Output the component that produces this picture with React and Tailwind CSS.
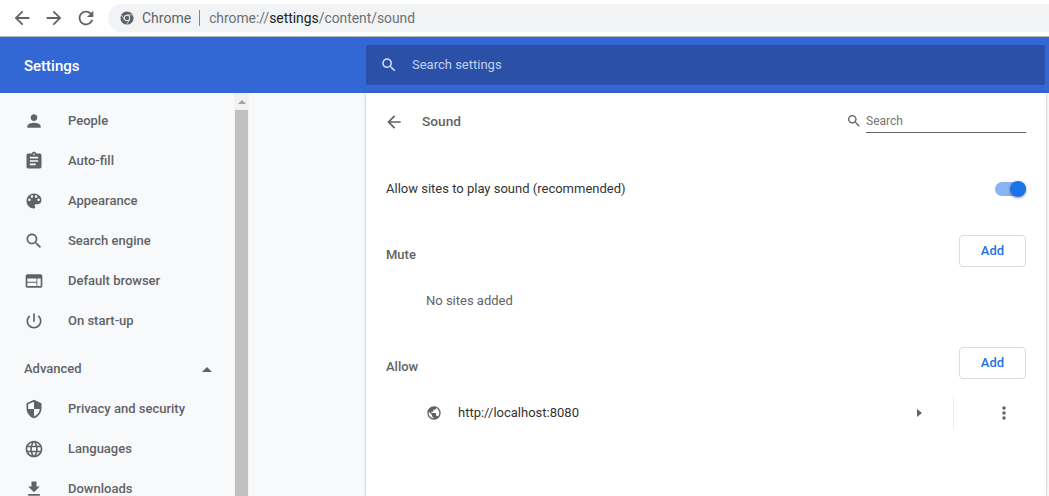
const paths = {
  person: "M12 12c2.21 0 4-1.79 4-4s-1.79-4-4-4-4 1.79-4 4 1.79 4 4 4zm0 2c-2.67 0-8 1.34-8 4v2h16v-2c0-2.66-5.33-4-8-4z",
  assignment: "M19 3h-4.18C14.4 1.84 13.3 1 12 1c-1.3 0-2.4.84-2.82 2H5c-1.1 0-2 .9-2 2v14c0 1.1.9 2 2 2h14c1.1 0 2-.9 2-2V5c0-1.1-.9-2-2-2zm-7 0c.55 0 1 .45 1 1s-.45 1-1 1-1-.45-1-1 .45-1 1-1zm2 14H7v-2h7v2zm3-4H7v-2h10v2zm0-4H7V7h10v2z",
  palette: "M12 3c-4.97 0-9 4.03-9 9s4.03 9 9 9c.83 0 1.5-.67 1.5-1.5 0-.39-.15-.74-.39-1.01-.23-.26-.38-.61-.38-.99 0-.83.67-1.5 1.5-1.5H16c2.76 0 5-2.24 5-5 0-4.42-4.03-8-9-8zm-5.5 9c-.83 0-1.5-.67-1.5-1.5S5.67 9 6.5 9 8 9.67 8 10.5 7.33 12 6.5 12zm3-4C8.67 8 8 7.33 8 6.5S8.67 5 9.5 5s1.5.67 1.5 1.5S10.33 8 9.5 8zm5 0c-.83 0-1.5-.67-1.5-1.5S13.67 5 14.5 5s1.5.67 1.5 1.5S15.33 8 14.5 8zm3 4c-.83 0-1.5-.67-1.5-1.5S16.67 9 17.5 9s1.5.67 1.5 1.5-.67 1.5-1.5 1.5z",
  search: "M15.5 14h-.79l-.28-.27C15.41 12.59 16 11.11 16 9.5 16 5.91 13.09 3 9.5 3S3 5.91 3 9.5 5.91 16 9.5 16c1.61 0 3.09-.59 4.23-1.57l.27.28v.79l5 4.99L20.49 19l-4.99-5zm-6 0C7.01 14 5 11.99 5 9.5S7.01 5 9.5 5 14 7.01 14 9.5 11.99 14 9.5 14z",
  web: "M20 4H4c-1.1 0-1.99.9-1.99 2L2 18c0 1.1.9 2 2 2h16c1.1 0 2-.9 2-2V6c0-1.1-.9-2-2-2zm-5 14H4v-4h11v4zm0-5H4V9h11v4zm5 5h-4V9h4v9z",
  power: "M13 3h-2v10h2V3zm4.83 2.17l-1.42 1.42C17.99 7.86 19 9.81 19 12c0 3.87-3.13 7-7 7s-7-3.13-7-7c0-2.19 1.01-4.14 2.58-5.42L6.17 5.17C4.23 6.82 3 9.26 3 12c0 4.97 4.03 9 9 9s9-4.03 9-9c0-2.74-1.23-5.18-3.17-6.83z",
  security: "M12 1L3 5v6c0 5.55 3.84 10.74 9 12 5.16-1.26 9-6.45 9-12V5l-9-4zm0 10.99h7c-.53 4.12-3.28 7.79-7 8.94V12H5V6.3l7-3.11v8.8z",
  language: "M11.99 2C6.47 2 2 6.48 2 12s4.47 10 9.99 10C17.52 22 22 17.52 22 12S17.52 2 11.99 2zm6.93 6h-2.95c-.32-1.25-.78-2.45-1.38-3.56 1.84.63 3.37 1.91 4.33 3.56zM12 4.04c.83 1.2 1.48 2.53 1.91 3.96h-3.82c.43-1.43 1.08-2.76 1.91-3.96zM4.26 14C4.1 13.36 4 12.69 4 12s.1-1.36.26-2h3.38c-.08.66-.14 1.32-.14 2 0 .68.06 1.34.14 2H4.26zm.82 2h2.95c.32 1.25.78 2.45 1.38 3.56-1.84-.63-3.37-1.9-4.33-3.56zm2.95-8H5.08c.96-1.66 2.49-2.93 4.33-3.56C8.81 5.55 8.35 6.75 8.03 8zM12 19.96c-.83-1.2-1.48-2.53-1.91-3.96h3.82c-.43 1.43-1.08 2.76-1.91 3.96zM14.34 14H9.66c-.09-.66-.16-1.32-.16-2 0-.68.07-1.35.16-2h4.68c.09.65.16 1.32.16 2 0 .68-.07 1.34-.16 2zm.25 5.56c.6-1.11 1.06-2.31 1.38-3.56h2.95c-.96 1.65-2.49 2.93-4.33 3.56zM16.36 14c.08-.66.14-1.32.14-2 0-.68-.06-1.34-.14-2h3.38c.16.64.26 1.31.26 2s-.1 1.36-.26 2h-3.38z",
  download: "M19 9h-4V3H9v6H5l7 7 7-7zM5 18v2h14v-2H5z",
  globe: "M12 2C6.48 2 2 6.48 2 12s4.48 10 10 10 10-4.48 10-10S17.52 2 12 2zm-1 17.93c-3.95-.49-7-3.85-7-7.93 0-.62.08-1.21.21-1.79L9 15v1c0 1.1.9 2 2 2v1.93zm6.9-2.54c-.26-.81-1-1.39-1.9-1.39h-1v-3c0-.55-.45-1-1-1H8v-2h2c.55 0 1-.45 1-1V7h2c1.1 0 2-.9 2-2v-.41c2.93 1.19 5 4.06 5 7.41 0 2.08-.8 3.97-2.1 5.39z",
  more: "M12 8c1.1 0 2-.9 2-2s-.9-2-2-2-2 .9-2 2 .9 2 2 2zm0 2c-1.1 0-2 .9-2 2s.9 2 2 2 2-.9 2-2-.9-2-2-2zm0 6c-1.1 0-2 .9-2 2s.9 2 2 2 2-.9 2-2-.9-2-2-2z",
  back: "M20 11H7.83l5.59-5.59L12 4l-8 8 8 8 1.41-1.41L7.83 13H20v-2z",
  forward: "M12 4l-1.41 1.41L16.17 11H4v2h12.17l-5.58 5.59L12 20l8-8z",
  refresh: "M17.65 6.35C16.2 4.9 14.21 4 12 4c-4.42 0-7.99 3.58-7.99 8s3.57 8 7.99 8c3.73 0 6.84-2.55 7.73-6h-2.08c-.82 2.33-3.04 4-5.65 4-3.31 0-6-2.69-6-6s2.69-6 6-6c1.66 0 3.14.69 4.22 1.78L13 11h7V4l-2.35 2.35z",
};

function Icon({ name, className }) {
  return (
    <svg viewBox="0 0 24 24" className={className} fill="currentColor">
      <path d={paths[name]} />
    </svg>
  );
}

function ChromeLogo() {
  return (
    <svg viewBox="0 0 16 16" className="w-[14px] h-[14px] text-[#5f6368]">
      <circle cx="8" cy="8" r="7.5" fill="currentColor" />
      <circle cx="8" cy="8" r="3.6" fill="#f1f3f4" />
      <circle cx="8" cy="8" r="2.6" fill="currentColor" />
      <path d="M8 4.4h6.4M5 10l-3-5.4M10.9 10l-3.3 5.4" stroke="#f1f3f4" strokeWidth="0.8" fill="none" />
    </svg>
  );
}

function Toolbar() {
  return (
    <div className="h-[37px] shrink-0 flex items-center bg-white border-b border-[#b8b8b8]">
      <div className="w-[108px] shrink-0 flex items-center text-[#5f6368] pl-[11px] gap-[10px]">
        <Icon name="back" className="w-[22px] h-[22px]" />
        <Icon name="forward" className="w-[22px] h-[22px]" />
        <Icon name="refresh" className="w-[22px] h-[22px]" />
      </div>
      <div className="flex-1 h-[28px] -mr-8 rounded-full bg-[#f1f3f4] flex items-center pl-[12px] text-[14px]">
        <ChromeLogo />
        <span className="ml-[8px] text-[#5f6368]">Chrome</span>
        <span className="ml-[8px] w-px h-[16px] bg-[#80868b]" />
        <span className="ml-[9px] text-[13.85px] text-[#6d7175]">
          chrome://<span className="text-[#202124]">settings</span>/content/sound
        </span>
      </div>
    </div>
  );
}

function Header() {
  return (
    <div className="h-[56px] shrink-0 flex items-center bg-[#3367d6]">
      <div className="w-[366px] shrink-0 pl-[24px] pt-[2px] text-white text-[15px] font-medium">Settings</div>
      <div className="w-[679px] h-[40px] mb-[1px] rounded-[2px] bg-[#2a50a8] flex items-center pl-[14px] gap-[14px] text-[#c3d0ec] text-[13px]">
        <Icon name="search" className="w-[18px] h-[18px] text-[#d3ddf2]" />
        <span>Search settings</span>
      </div>
    </div>
  );
}

function NavItem({ icon, label }) {
  return (
    <div className="h-[40px] flex items-center pl-[24px]">
      <Icon name={icon} className="w-5 h-5 text-[#5f6368] shrink-0" />
      <span className="ml-[24px] text-[13px] font-medium text-[#5f6368]">{label}</span>
    </div>
  );
}

function Sidebar() {
  return (
    <div className="w-[234px] shrink-0 bg-[#f8f9fa] pt-[8px] overflow-hidden">
      <NavItem icon="person" label="People" />
      <NavItem icon="assignment" label="Auto-fill" />
      <NavItem icon="palette" label="Appearance" />
      <NavItem icon="search" label="Search engine" />
      <NavItem icon="web" label="Default browser" />
      <NavItem icon="power" label="On start-up" />
      <div className="mt-[8px] h-[40px] flex items-center justify-between pl-[24px] pr-[21px]">
        <span className="text-[13px] font-medium text-[#5f6368]">Advanced</span>
        <span className="mr-[1px] w-0 h-0 border-x-[5px] border-x-transparent border-b-[5px] border-b-[#5f6368]" />
      </div>
      <NavItem icon="security" label="Privacy and security" />
      <NavItem icon="language" label="Languages" />
      <NavItem icon="download" label="Downloads" />
    </div>
  );
}

function Scrollbar() {
  return (
    <div className="w-[15px] shrink-0 bg-[#f1f1f1] flex flex-col">
      <div className="h-[17px] shrink-0 flex items-center justify-center">
        <span className="w-0 h-0 border-x-[4px] border-x-transparent border-b-[4px] border-b-[#a3a3a3]" />
      </div>
      <div className="flex-1 ml-px mr-px bg-[#c1c1c1]" />
    </div>
  );
}

function AddButton() {
  return (
    <button className="w-[67px] h-[32px] rounded-[4px] border border-[#dadce0] bg-white text-[13px] font-medium text-[#1a73e8]">
      Add
    </button>
  );
}

function SectionHead({ title }) {
  return (
    <div className="flex items-center justify-between h-[32px]">
      <span className="pt-[7px] text-[13px] font-medium text-[#5f6368]">{title}</span>
      <AddButton />
    </div>
  );
}

function Card() {
  return (
    <div className="w-[680px] h-full bg-white shadow-[0_0_2px_rgba(60,64,67,0.5)] px-[20px] text-[13px]">
      <div className="h-[56px] pt-[1px] flex items-center">
        <Icon name="back" className="-ml-[2px] w-[20px] h-[20px] text-[#5f6368]" />
        <span className="ml-[18px] text-[13.7px] font-medium text-[#5f6368]">Sound</span>
        <Icon name="search" className="ml-auto -mt-[1px] w-[16px] h-[16px] text-[#5f6368]" />
        <div className="ml-[4px] -mt-[2px] w-[160px] h-[24px] border-b border-[#5f6368] text-[12px] text-[#757575] leading-[24px]">
          Search
        </div>
      </div>
      <div className="mt-[16px] h-[48px] flex items-center justify-between">
        <span className="text-[#333333]">Allow sites to play sound (recommended)</span>
        <div className="relative w-[31px] h-[14px] rounded-full bg-[#8ab4f0]">
          <span className="absolute right-0 -top-[1px] w-[16px] h-[16px] rounded-full bg-[#1a73e8] shadow-[0_1px_3px_rgba(0,0,0,0.4)]" />
        </div>
      </div>
      <div className="mt-[22px]">
        <SectionHead title="Mute" />
      </div>
      <div className="h-[48px] mt-[10px] flex items-center pl-[40px] text-[#5f6368]">No sites added</div>
      <div className="mt-[22px]">
        <SectionHead title="Allow" />
      </div>
      <div className="mt-[18px] h-[32px] flex items-center pl-[40px]">
        <Icon name="globe" className="w-[16px] h-[16px] text-[#5f6368]" />
        <span className="ml-[16px] text-[#333333]">http://localhost:8080</span>
        <span className="ml-auto w-0 h-0 border-y-[4.5px] border-y-transparent border-l-[5px] border-l-[#5f6368]" />
        <span className="ml-[31px] w-px h-[32px] bg-[#e8eaed]" />
        <Icon name="more" className="ml-[40px] mr-[12px] w-[20px] h-[20px] text-[#5f6368]" />
      </div>
    </div>
  );
}

export default function App() {
  return (
    <div className="w-[1049px] h-[496px] overflow-hidden flex flex-col bg-[#f8f9fa] font-['Roboto',sans-serif]">
      <Toolbar />
      <Header />
      <div className="flex-1 flex min-h-0">
        <Sidebar />
        <Scrollbar />
        <div className="flex-1 pl-[117px]">
          <Card />
        </div>
      </div>
    </div>
  );
}
